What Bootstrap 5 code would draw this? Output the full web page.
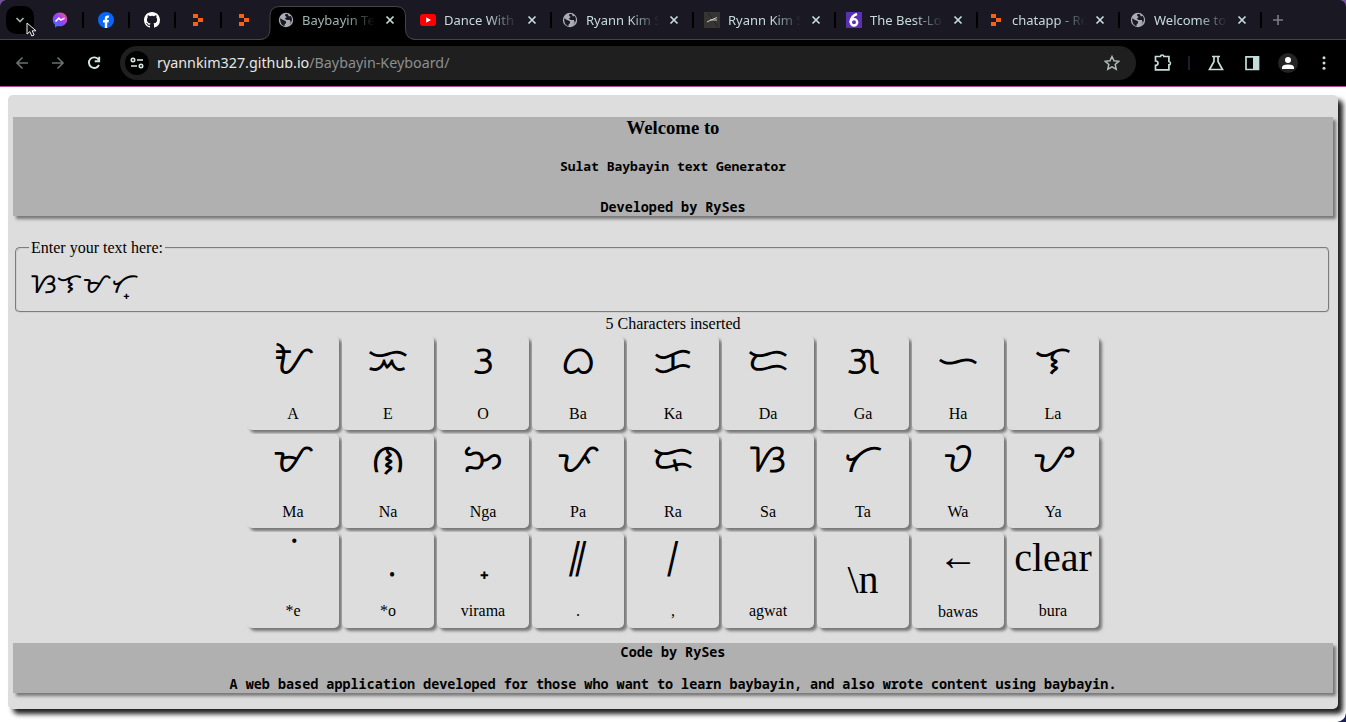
<!DOCTYPE html>
<html lang="en">
<head>
<meta charset="utf-8">
<title>Baybayin Text Generator</title>
<link href="https://cdn.jsdelivr.net/npm/bootstrap@5.3.0/dist/css/bootstrap.min.css" rel="stylesheet">
<script src="https://cdn.jsdelivr.net/npm/bootstrap@5.3.0/dist/js/bootstrap.bundle.min.js" defer></script>
<style>
body{height:722px;overflow:hidden;background:#fff;color:#000;font:16px/18px "Liberation Serif",serif;position:relative}
.chrome{font-family:"Noto Sans",sans-serif;background:#000;height:87px;border-bottom:1px solid #b3488f;position:relative}
.strip{height:40px;background:#1a1923;border-bottom:1px solid #454548;color:#c5dcda}
.lead-slot{width:37px;padding:6px 0 0 6px}
.tab-search{width:28px;height:28px;border-radius:10px;background:#000}
.tab{height:39px;position:relative;flex:none}
.tab::after{content:"";position:absolute;right:-1px;top:12px;width:2px;height:16px;background:#000}
.tab.mini{width:46px}
.tab.full{width:142px;padding-left:11px}
.tab .ttl{width:73px;margin-left:8px;font-size:13px;line-height:20px;white-space:nowrap;overflow:hidden;-webkit-mask-image:linear-gradient(90deg,#000 60%,transparent 100%);mask-image:linear-gradient(90deg,#000 60%,transparent 100%)}
.tab.full svg:last-child{margin-left:10px}
.tab.active::after,.tab.quiet::after{display:none}
.tab.active{color:#9fb4b1}
.shape{position:absolute;left:-7px;top:6px}
.tab.active>svg,.tab.active>.ttl{position:relative}
.tools{height:46px}
.omni{width:1016px;height:34px;border-radius:17px;background:#1f1f1f;margin-left:14px}
.site{width:24px;height:24px;border-radius:12px;background:#000;margin-left:5px}
.url{font-size:14.3px;line-height:20px;margin-left:8px;color:#e6e8e8;white-space:nowrap}
.url span{color:#8b8f8f}
.cursor{position:absolute;left:26px;top:22px}
.corner{position:absolute}
.panel{margin:8px 8px 0;width:1330px;height:614px;padding:22px 5px 0;background:#ddd;border-radius:5px;box-shadow:5px 5px 5px #222}
.bar{width:1320px;background:#b0b0b0;box-shadow:3px 3px 3px #777;text-align:center;font-family:"Noto Sans Mono","DejaVu Sans Mono",monospace;font-weight:700}
.top-bar{height:99px}
.top-bar h3{font:700 18.72px/22px "Liberation Serif",serif;margin:0}
.top-bar .sub{font-size:13px;line-height:18px;margin-top:18px}
.top-bar .by{font-size:13.44px;line-height:18px;margin-top:23px}
fieldset.entry{margin:23px 0 0 2px;width:1315px;height:74px;border-radius:5px;padding:0 14px;border:2px groove #d0d0d0}
fieldset.entry legend{float:none;width:auto;font-size:16px;line-height:18px;padding:0 2px;margin:0 0 0 -2px}
.bay{font-family:"Noto Sans Tagalog","Noto Sans",sans-serif}
.typed{font-size:28px;line-height:38px;padding:6px 0 0}
.count{line-height:18px;margin-top:2px;margin-bottom:3px}
.keys{width:852px;margin-left:234px;display:grid;grid-template-columns:repeat(9,92px);column-gap:3px;row-gap:4px;grid-template-rows:94px 94px 96px}
.key{border-radius:5px;box-shadow:3px 3px 3px #777;background:#ddd;text-align:center}
.glyph{height:69px;font-size:40px;line-height:50px}
.glyph.bay{line-height:46px}
.key.low .glyph{height:70px;line-height:52px}
.key.low .glyph.bay{line-height:48px}
.key.low .glyph.newline{padding-top:22px}
.key.drop .glyph{height:71px}
.foot-bar{height:50px;margin-top:15px;font-size:13.44px;line-height:18px}
.foot-bar p{margin:0 0 14px}
</style>
</head>
<body>
<svg width="0" height="0" class="position-absolute">
<defs>
<linearGradient id="mg" x1="0" y1="1" x2="1" y2="0"><stop offset="0" stop-color="#1684ff"/><stop offset=".5" stop-color="#9a3dfd"/><stop offset="1" stop-color="#ff5d70"/></linearGradient>
<symbol id="globe" viewBox="0 0 16 16"><circle cx="8" cy="8" r="7.2" fill="#a9acb3"/><path d="M2.2 6.2 5 8l2.700.9.4 2.200-1.600 1.700v1.300C3.700 13.400 1.900 10.200 2.200 6.200ZM7.500 2l-.5 1.700 1.700 1.300-1.900 1.700 2 1.300h3l1 2.200-1.700 2.600c3.200-2.200 3.800-6.500 1.400-9L11 4.600 9.600 2Z" fill="#1a1923"/></symbol>
<symbol id="replit" viewBox="0 0 16 16"><path d="M3 2h5v4H3zM3 10h5v4H3zM8 6h5v4H8z" fill="#fa5f12"/></symbol>
<symbol id="x" viewBox="0 0 10 10"><path d="m1.500 1.500 7 7m0-7-7 7" stroke="#c5dcda" stroke-width="1.700"/></symbol>
</defs></svg>
<header class="chrome">
<div class="strip d-flex">
<div class="lead-slot"><div class="tab-search d-flex align-items-center justify-content-center"><svg width="10" height="8" viewBox="0 0 10 8"><path d="m1.500 2 3.500 3.500L8.500 2" fill="none" stroke="#9fb4b1" stroke-width="1.700"/></svg></div></div>
<div class="tab mini d-flex align-items-center justify-content-center"><svg width="16" height="16"><path d="M8 .5C3.500.5.800 3.600.800 7.400c0 2.200.8 3.900 2.200 5.200v2.800l2.600-1.400c5.200 1.200 9.600-2.100 9.600-6.600C15.200 3.600 12.300.5 8 .5Z" fill="url(#mg)"/><path d="m3.500 9.500 3.200-3.300 2.200 1.900 3.600-2" fill="none" stroke="#fff" stroke-width="1.600"/></svg></div>
<div class="tab mini d-flex align-items-center justify-content-center"><svg width="16" height="16"><circle cx="8" cy="8" r="8" fill="#0866ff"/><path d="M6.800 16v-5.500H5V8h1.800V6.800c0-2.600 1.300-3.600 4.100-3.200v2.200c-1.300-.1-1.700.1-1.700 1.200v1h1.700l-.4 2.500H9.200V16Z" fill="#fff"/></svg></div>
<div class="tab mini d-flex align-items-center justify-content-center"><svg width="16" height="16" viewBox="0 0 16 16"><path fill="#fff" d="M8 0C3.580 0 0 3.580 0 8c0 3.540 2.290 6.530 5.470 7.590.4.070.55-.17.55-.38v-1.490c-2.010.37-2.530-.49-2.690-.94-.09-.23-.48-.94-.82-1.130-.28-.15-.68-.52-.01-.53.63-.01 1.080.58 1.230.82.72 1.210 1.870.87 2.330.66.070-.52.28-.87.510-1.070-1.780-.2-3.640-.89-3.640-3.950 0-.87.31-1.590.82-2.150-.08-.2-.36-1.020.08-2.120 0 0 .67-.21 2.200.82a7.600 7.600 0 0 1 4 0c1.530-1.040 2.200-.82 2.200-.82.44 1.100.16 1.920.08 2.120.51.56.82 1.270.82 2.150 0 3.070-1.870 3.750-3.650 3.950.29.25.54.73.54 1.480v2.200c0 .21.15.46.55.38A8 8 0 0 0 16 8c0-4.420-3.580-8-8-8Z"/></svg></div>
<div class="tab mini d-flex align-items-center justify-content-center"><svg width="16" height="16"><use href="#replit"/></svg></div>
<div class="tab mini quiet d-flex align-items-center justify-content-center"><svg width="16" height="16"><use href="#replit"/></svg></div>
<div class="tab full active d-flex align-items-center"><svg class="shape position-absolute" width="156" height="35"><path d="M0 34Q10 33 10 23V10Q10 .500 20 .500H136Q145.500.500 145.500 10V23Q145.500 33 155.500 34Z" fill="#000"/><path d="M0 33.500Q10 33 10 23V10Q10 .500 20 .500H136Q145.500.500 145.500 10V23Q145.500 33 155.500 33.500" fill="none" stroke="#454548"/></svg><svg width="16" height="16"><use href="#globe"/></svg><span class="ttl">Baybayin Te</span><svg width="10" height="10"><use href="#x"/></svg></div>
<div class="tab full d-flex align-items-center"><svg width="16" height="16"><rect y="2" width="16" height="12" rx="3" fill="#f00"/><path d="m6.200 5.300 4.800 2.700-4.800 2.700Z" fill="#fff"/></svg><span class="ttl">Dance With</span><svg width="10" height="10"><use href="#x"/></svg></div>
<div class="tab full d-flex align-items-center"><svg width="16" height="16"><use href="#globe"/></svg><span class="ttl">Ryann Kim S</span><svg width="10" height="10"><use href="#x"/></svg></div>
<div class="tab full d-flex align-items-center"><svg width="16" height="16"><path d="M0 0h16v16H0z" fill="#363532"/><path d="m4 1 10 14" stroke="#222"/><path d="m3 10 4-2 6-2.500M6 8h7" stroke="#ccc" fill="none"/></svg><span class="ttl">Ryann Kim S</span><svg width="10" height="10"><use href="#x"/></svg></div>
<div class="tab full d-flex align-items-center"><svg width="16" height="16"><path d="M0 0h16v16H0z" fill="#5a30b5"/><path d="M11 2Q5 4 4.500 10.500" fill="none" stroke="#fff" stroke-width="2.600"/><circle cx="8" cy="10.300" r="3.200" fill="none" stroke="#fff" stroke-width="2.400"/></svg><span class="ttl">The Best-Lo</span><svg width="10" height="10"><use href="#x"/></svg></div>
<div class="tab full d-flex align-items-center"><svg width="16" height="16"><use href="#replit"/></svg><span class="ttl">chatapp - Re</span><svg width="10" height="10"><use href="#x"/></svg></div>
<div class="tab full d-flex align-items-center"><svg width="16" height="16"><use href="#globe"/></svg><span class="ttl">Welcome to</span><svg width="10" height="10"><use href="#x"/></svg></div>
<svg width="34" height="39"><path d="M12 20h10M17 15v10" stroke="#7c7c86" stroke-width="1.600"/></svg>
</div>
<div class="tools d-flex align-items-center">
<svg width="106" height="46" fill="none" stroke-width="1.700"><path d="M28 23H17m5.500-5.500L17 23l5.500 5.500M52 23h11m-5.500-5.500L63 23l-5.500 5.500" stroke="#65716f"/><path d="M98.500 19.500A5.300 5.300 0 1 0 99 25M99.200 16.800v4.400h-4.500" stroke="#d5e5e3" stroke-width="1.900"/></svg>
<div class="omni d-flex align-items-center">
<div class="site"><svg width="24" height="24" fill="none" stroke="#dce8e7" stroke-width="1.600"><circle cx="8" cy="9" r="1.700"/><path d="M12 9h6M6 15h6"/><circle cx="16" cy="15" r="1.700"/></svg></div>
<div class="url">ryannkim327.github.io<span>/Baybayin-Keyboard/</span></div>
<svg class="ms-auto me-3" width="16" height="16"><path d="m8 1.500 2 4.300 4.700.5-3.500 3.200 1 4.700L8 11.800l-4.200 2.400 1-4.700-3.500-3.200 4.700-.5Z" fill="none" stroke="#aebab9" stroke-width="1.500"/></svg>
</div>
<svg class="ms-auto" width="209" height="46" fill="none" stroke="#c5dcda" stroke-width="1.700"><path d="M18.500 16.500h5q0-1.500 1.700-1.500t1.700 1.500h5v5q1.500 0 1.500 1.700t-1.500 1.700v5H18.500v-4.500q2.500 0 2.500-2.200t-2.500-2.200Z"/><path d="M52 16v14" stroke="#1e1d2b" stroke-width="2"/><path d="M75 16.500h8m-6 0v5l-4.500 8h13l-4.500-8v-5"/><path d="M109 16.800h12.500v12.700H109z"/><path d="M116 16h6v14h-6z" fill="#c5dcda" stroke="none"/><circle cx="151" cy="23" r="10" fill="#242424" stroke="none"/><circle cx="151" cy="20" r="3" fill="#fff" stroke="none"/><path d="M145 29v-1.500q0-3 6-3t6 3V29Z" fill="#fff" stroke="none"/><g fill="#c5dcda" stroke="none"><circle cx="187" cy="17.800" r="1.500"/><circle cx="187" cy="23" r="1.500"/><circle cx="187" cy="28.200" r="1.500"/></g></svg>
</div>
<svg class="cursor" width="12" height="16"><path d="M1 1v11l2.800-2.400 2 4.400 2.300-1-1.900-4.200H10Z" fill="#111" stroke="#eee"/></svg>
<svg class="corner top-0 start-0" width="6" height="6"><path d="M0 0h6Q1 1 0 6Z" fill="#74529b"/></svg>
<svg class="corner top-0 end-0" width="6" height="6"><path d="M6 0H0q5 1 6 6Z" fill="#74529b"/></svg>
</header>
<main class="panel">
<section class="bar top-bar"><h3>Welcome to</h3><div class="sub">Sulat Baybayin text Generator</div><div class="by">Developed by RySes</div></section>
<fieldset class="entry"><legend>Enter your text here:</legend><div class="typed bay">ᜐᜎᜋᜆ᜔</div></fieldset>
<div class="count text-center">5 Characters inserted</div>
<section class="keys">
<div class="key"><div class="glyph bay">ᜀ</div>A</div>
<div class="key"><div class="glyph bay">ᜁ</div>E</div>
<div class="key"><div class="glyph bay">ᜂ</div>O</div>
<div class="key"><div class="glyph bay">ᜊ</div>Ba</div>
<div class="key"><div class="glyph bay">ᜃ</div>Ka</div>
<div class="key"><div class="glyph bay">ᜇ</div>Da</div>
<div class="key"><div class="glyph bay">ᜄ</div>Ga</div>
<div class="key"><div class="glyph bay">ᜑ</div>Ha</div>
<div class="key"><div class="glyph bay">ᜎ</div>La</div>
<div class="key"><div class="glyph bay">ᜋ</div>Ma</div>
<div class="key"><div class="glyph bay">ᜈ</div>Na</div>
<div class="key"><div class="glyph bay">ᜅ</div>Nga</div>
<div class="key"><div class="glyph bay">ᜉ</div>Pa</div>
<div class="key"><div class="glyph bay">ᜍ</div>Ra</div>
<div class="key"><div class="glyph bay">ᜐ</div>Sa</div>
<div class="key"><div class="glyph bay">ᜆ</div>Ta</div>
<div class="key"><div class="glyph bay">ᜏ</div>Wa</div>
<div class="key"><div class="glyph bay">ᜌ</div>Ya</div>
<div class="key low"><div class="glyph bay ps-3">ᜒ</div>*e</div>
<div class="key low"><div class="glyph bay ps-3">ᜓ</div>*o</div>
<div class="key low"><div class="glyph bay ps-4">᜔</div>virama</div>
<div class="key low"><div class="glyph bay">᜶</div>.</div>
<div class="key low"><div class="glyph bay">᜵</div>,</div>
<div class="key low"><div class="glyph"></div>agwat</div>
<div class="key low"><div class="glyph newline">\n</div></div>
<div class="key drop"><div class="glyph">←</div>bawas</div>
<div class="key low"><div class="glyph">clear</div>bura</div>
</section>
<footer class="bar foot-bar"><p>Code by RySes</p><p>A web based application developed for those who want to learn baybayin, and also wrote content using baybayin.</p></footer>
</main>
<svg class="corner bottom-0 end-0" width="9" height="9"><path d="M9 0Q8 8 0 9H9Z" fill="#1d2050"/></svg>
</body>
</html>
